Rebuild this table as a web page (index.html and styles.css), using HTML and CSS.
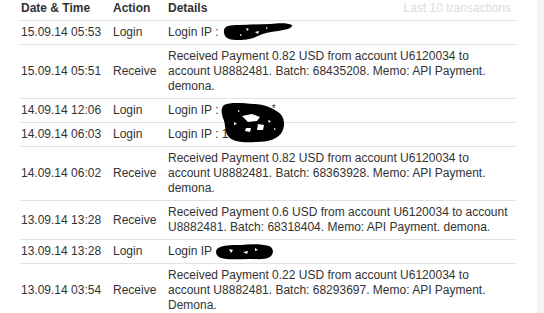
FILE: index.html
```html
<!DOCTYPE html>
<html>
<head>
<meta charset="utf-8">
<link rel="stylesheet" href="styles.css">
</head>
<body>
<div class="page">
  <div class="main">
    <table class="tx">
      <colgroup>
        <col class="c-date">
        <col class="c-action">
        <col class="c-details">
      </colgroup>
      <thead>
        <tr>
          <th>Date &amp; Time</th>
          <th>Action</th>
          <th><div class="dhead"><span>Details</span><span class="last">Last 10 transactions</span></div></th>
        </tr>
      </thead>
      <tbody>
        <tr>
          <td>15.09.14 05:53</td>
          <td>Login</td>
          <td>Login IP : <span class="redact"><svg class="blob b1" width="72" height="18" viewBox="0 0 72 18"><path d="M2,9 C1,3 8,2 16,2 C26,2 36,1 48,1 C58,0 66,0 70,2 C71,5 64,7 56,8 C48,9 42,10 36,13 C30,16 22,17 14,17 C6,17 2,14 2,9Z" fill="#000"/><path d="M24,5 l3,1 -2,2 z M33,9 l4,-1 -1,3 z M18,11 l2,1 -2,1 z M44,4 l2,1 -2,1 z" fill="#fff"/></svg></span></td>
        </tr>
        <tr>
          <td>15.09.14 05:51</td>
          <td>Receive</td>
          <td>Received Payment 0.82 USD from account U6120034 to account U8882481. Batch: 68435208. Memo: API Payment. demona.</td>
        </tr>
        <tr>
          <td>14.09.14 12:06</td>
          <td>Login</td>
          <td>Login IP : <span class="redact"><svg class="blob b2" width="66" height="42" viewBox="0 0 66 42"><path d="M4,3 C10,0 22,1 34,2 C44,2 52,6 58,10 C64,14 66,22 62,30 C58,37 48,40 36,40 C24,41 12,40 8,34 C4,28 6,22 3,16 C1,10 1,6 4,3Z" fill="#000"/><path d="M22,14 l10,-2 8,3 -3,4 -9,1 z M38,22 l6,1 -1,5 -6,0 z M26,26 l5,0 -1,4 -5,-1 z M48,18 l3,1 -2,2 z M14,20 l3,2 -3,1 z M18,8 l2,1 -2,1 z M54,26 l2,1 -2,1 z" fill="#fff"/></svg><span class="star">*</span></span></td>
        </tr>
        <tr>
          <td>14.09.14 06:03</td>
          <td>Login</td>
          <td>Login IP : 1</td>
        </tr>
        <tr>
          <td>14.09.14 06:02</td>
          <td>Receive</td>
          <td>Received Payment 0.82 USD from account U6120034 to account U8882481. Batch: 68363928. Memo: API Payment. demona.</td>
        </tr>
        <tr>
          <td>13.09.14 13:28</td>
          <td>Receive</td>
          <td>Received Payment 0.6 USD from account U6120034 to account U8882481. Batch: 68318404. Memo: API Payment. demona.</td>
        </tr>
        <tr>
          <td>13.09.14 13:28</td>
          <td>Login</td>
          <td>Login IP <span class="redact"><svg class="blob b3" width="60" height="18" viewBox="0 0 60 18"><path d="M2,6 C6,2 16,2 26,2 C36,1 46,1 54,3 C59,5 59,11 55,14 C50,17 42,16 34,16 C24,16 12,17 6,15 C1,13 0,9 2,6Z" fill="#000"/><path d="M14,6 l4,1 -2,3 z M28,9 l5,-1 -1,3 z M40,5 l3,2 -3,1 z" fill="#fff"/></svg></span></td>
        </tr>
        <tr>
          <td>13.09.14 03:54</td>
          <td>Receive</td>
          <td>Received Payment 0.22 USD from account U6120034 to account U8882481. Batch: 68293697. Memo: API Payment. Demona.</td>
        </tr>
      </tbody>
    </table>
  </div>
  <div class="side"></div>
</div>
</body>
</html>
```

FILE: styles.css
```css
html, body {
  margin: 0;
  padding: 0;
  background: #fff;
}
.page {
  display: flex;
  width: 544px;
  height: 313px;
  overflow: hidden;
}
.main {
  flex: 0 0 537px;
  padding-left: 20px;
  box-sizing: border-box;
}
.side {
  flex: 1;
  background: #f5f3f0;
}
.tx {
  width: 496px;
  border-collapse: collapse;
  table-layout: fixed;
  font-family: "Liberation Sans", Arial, sans-serif;
  font-size: 12px;
  line-height: 15px;
  color: #333;
}
.c-date { width: 92px; }
.c-action { width: 55px; }
.tx th {
  text-align: left;
  font-weight: bold;
  padding: 1px 0 4px 1px;
  border-bottom: 1px solid #e2e2e2;
}
.tx td {
  padding: 4px 0 4px 1px;
  border-bottom: 1px solid #e2e2e2;
  vertical-align: middle;
}
.tx td:last-child {
  padding-right: 6px;
}
.dhead {
  display: flex;
  justify-content: space-between;
}
.last {
  font-weight: normal;
  color: #dcdcdc;
  padding-right: 5px;
}
.redact {
  position: relative;
  display: inline-block;
  width: 0;
  height: 15px;
  vertical-align: top;
}
.blob {
  position: absolute;
  display: block;
}
.b1 { left: 0; top: -2px; }
.b2 { left: -2px; top: -1px; }
.b3 { left: 0; top: -1px; }
.star {
  position: absolute;
  left: 50px;
  top: 1px;
  font-size: 10px;
  line-height: 10px;
  color: #333;
}
```
